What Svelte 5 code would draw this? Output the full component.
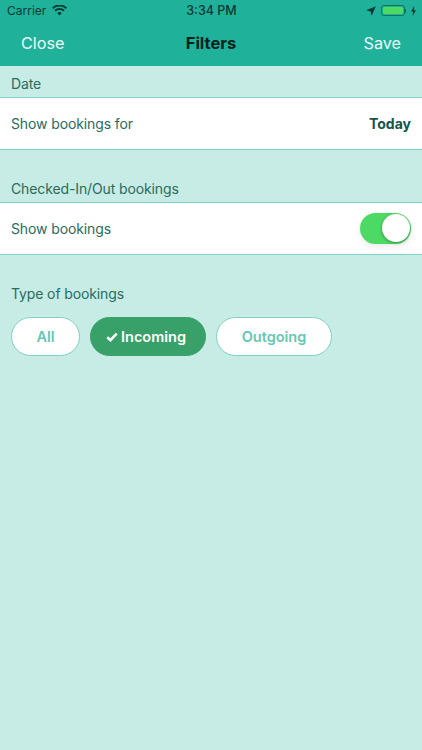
<script>
	let showBookings = true
	let type = 'Incoming'
	const types = ['All', 'Incoming', 'Outgoing']
</script>

<main>
	<header>
		<div class="status">
			<div class="status-left">
				<span>Carrier</span>
				<svg width="15" height="11" viewBox="0 0 15 11"><path d="M7.500 10.600 5.200 8.100a3.300 3.300 0 0 1 4.600 0zM3.700 6.500 2.300 5a7.600 7.600 0 0 1 10.400 0l-1.400 1.500a5.600 5.600 0 0 0-7.600 0zM1.300 3.900 0 2.500a10.900 10.900 0 0 1 15 0l-1.300 1.400a9 9 0 0 0-12.400 0z" fill="#0b3b35"/></svg>
			</div>
			<span class="time">3:34 PM</span>
			<div class="status-right">
				<svg width="10" height="10" viewBox="0 0 10 10"><path d="M9.800.2 5.700 9.800 4.600 5.400.2 4.300z" fill="#0b3b35"/></svg>
				<div class="battery"><div class="level"></div></div>
				<div class="nub"></div>
				<svg width="5" height="10" viewBox="0 0 5 10"><path d="M3.200 0 0 5.600h2L1.600 10 5 4.200H3z" fill="#0b3b35"/></svg>
			</div>
		</div>
		<nav>
			<span class="nav-btn">Close</span>
			<span class="title">Filters</span>
			<span class="nav-btn save">Save</span>
		</nav>
	</header>

	<section class="date">
		<h2>Date</h2>
		<div class="row">
			<span>Show bookings for</span>
			<b>Today</b>
		</div>
	</section>

	<section class="checked">
		<h2>Checked-In/Out bookings</h2>
		<div class="row">
			<span>Show bookings</span>
			<button class="switch" class:on={showBookings} aria-label="Show bookings" on:click={() => showBookings = !showBookings}>
				<span class="knob"></span>
			</button>
		</div>
	</section>

	<section class="types">
		<h2>Type of bookings</h2>
		<div class="pills">
			{#each types as t}
				<button class="pill" class:active={type === t} on:click={() => type = t}>
					{#if type === t}
						<svg width="12" height="10" viewBox="0 0 12 10"><path d="M1.300 5.200 4.500 8.200 10.700 1.700" fill="none" stroke="#fff" stroke-width="2.600"/></svg>
					{/if}
					{t}
				</button>
			{/each}
		</div>
	</section>
</main>

<style>
	:global(body){
		margin: 0;
		background: #c7ece5;
	}

	main{
		width: 422px;
		height: 750px;
		overflow: hidden;
		background: #c7ece5;
		font-family: Inter, "Liberation Sans", sans-serif;
		color: #2a6b60;
	}

	header{
		height: 66px;
		background: #20b19b;
	}

	.status{
		height: 21px;
		padding: 0 6px 0 7px;
		display: grid;
		grid-template-columns: 1fr auto 1fr;
		align-items: center;
		font-size: 12px;
		color: #0b3b35;
	}
	.status-left{
		display: flex;
		align-items: center;
		gap: 6px;
	}
	.time{
		font-weight: 500;
		font-size: 12.500px;
	}
	.status-right{
		display: flex;
		align-items: center;
		justify-content: flex-end;
	}
	.battery{
		width: 20px;
		height: 7px;
		margin-left: 5px;
		padding: 1px;
		border: 1px solid #17705f;
		border-radius: 3px;
	}
	.level{
		height: 100%;
		background: #4cd964;
		border-radius: 1.500px;
	}
	.nub{
		width: 1px;
		height: 4px;
		margin: 0 5px 0 0;
		background: #17705f;
	}

	nav{
		height: 43px;
		padding: 0 21px 2px;
		display: grid;
		grid-template-columns: 1fr auto 1fr;
		align-items: center;
	}
	.nav-btn{
		font-size: 16.200px;
		color: #eafaf6;
	}
	.save{
		text-align: right;
	}
	.title{
		font-size: 16.500px;
		font-weight: 700;
		color: #04211d;
	}

	h2{
		margin: 0;
		font-size: 14px;
		font-weight: 400;
		line-height: 18px;
		letter-spacing: -0.12px;
		color: #2a6b60;
		padding: 0 11px;
	}

	.date{
		padding-top: 9px;
	}
	.date h2{
		margin-bottom: 4px;
	}
	.checked{
		padding-top: 30px;
	}
	.checked h2{
		margin-bottom: 4px;
	}
	.types{
		padding-top: 30px;
	}

	.row{
		height: 50px;
		padding: 0 11px 1px;
		display: flex;
		align-items: center;
		justify-content: space-between;
		background: #fff;
		border-top: 1px solid #7fd0c1;
		border-bottom: 1px solid #7fd0c1;
		font-size: 14px;
		letter-spacing: -0.12px;
		color: #2a6b60;
	}
	.row b{
		font-weight: 700;
		letter-spacing: 0;
		color: #17544a;
	}

	.switch{
		width: 51px;
		height: 31px;
		padding: 0;
		border: none;
		border-radius: 16px;
		background: #d5d5d5;
		display: flex;
		align-items: center;
		box-shadow: 0 3px 6px rgba(0, 0, 0, 0.08);
	}
	.switch.on{
		background: #4cd964;
		justify-content: flex-end;
	}
	.knob{
		width: 28px;
		height: 28px;
		margin: 0 1.500px;
		background: #fff;
		border-radius: 50%;
		box-shadow: 0 1px 3px rgba(0, 0, 0, 0.35);
	}

	.pills{
		margin-top: 14px;
		padding: 0 11px;
		display: flex;
		gap: 10px;
	}
	.pill{
		height: 39px;
		padding: 0;
		display: flex;
		align-items: center;
		justify-content: center;
		gap: 3px;
		background: #fff;
		border: 1px solid #7fd0c1;
		border-radius: 20px;
		font-family: inherit;
		font-size: 14.500px;
		font-weight: 600;
		color: #65c6b6;
		width: 116px;
	}
	.pill:first-child{
		width: 69px;
	}
	.pill.active{
		padding-right: 4px;
		background: #38a069;
		border-color: #38a069;
		color: #fff;
	}
</style>
